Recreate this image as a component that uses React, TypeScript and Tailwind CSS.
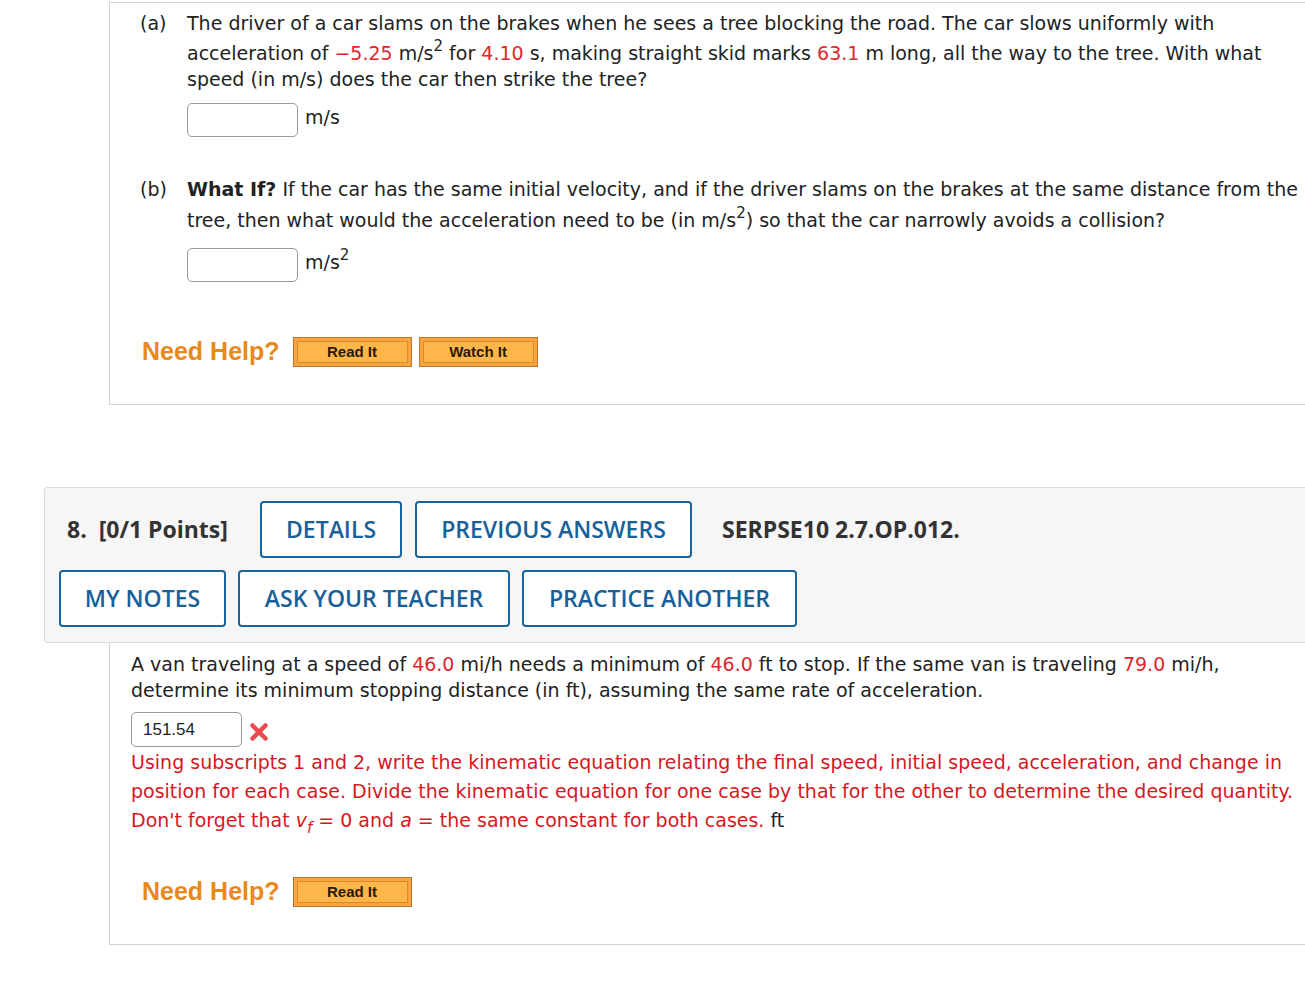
import React from "react";

const body = "font-['DejaVu_Sans',Verdana,sans-serif] text-[19px] text-[#222]";
const red = "text-[#e0262b]";
const sup = "text-[15px] relative -top-[9px]";

function HelpRow({ watch }: { watch?: boolean }) {
  return (
    <div className="flex items-center">
      <span className="font-['Liberation_Sans',Arial,sans-serif] font-bold text-[25px] leading-[30px] text-[#e8891c] mr-[13px] -mt-[3px]">
        Need Help?
      </span>
      <HelpButton label="Read It" />
      {watch && (
        <div className="ml-[7px]">
          <HelpButton label="Watch It" />
        </div>
      )}
    </div>
  );
}

function HelpButton({ label }: { label: string }) {
  return (
    <div className="w-[119px] h-[30px] border border-[#b8732c] bg-[#f9a43c] p-[3px]">
      <div className="h-full border border-[#d9892e] bg-[#fdb64a] flex items-center justify-center font-['Liberation_Sans',Arial,sans-serif] font-bold text-[15px] text-[#2a1a05]">
        {label}
      </div>
    </div>
  );
}

function AnswerBox({ value }: { value?: string }) {
  return (
    <div className="w-[111px] h-[34px] rounded-[5px] border border-[#9a9a9a] bg-white flex items-center pl-[11px] font-['Liberation_Sans',Arial,sans-serif] text-[17px] text-[#222]">
      {value}
    </div>
  );
}

function BlueButton({ label, w }: { label: string; w: string }) {
  return (
    <div
      className={`${w} h-[57px] rounded-[4px] border-2 border-[#1a659a] bg-white flex items-center justify-center font-['Open_Sans',sans-serif] font-semibold text-[23px] text-[#17609a]`}
    >
      {label}
    </div>
  );
}

export default function App() {
  return (
    <div className="min-h-screen w-full bg-white overflow-hidden">
      {/* previous question, parts a and b */}
      <div className={`${body} mt-[2px] ml-[109px] border-t border-l border-b border-[#d4d4d4] pl-[30px] pt-[7px] h-[403px] whitespace-nowrap`}>
        <div className="flex leading-[26px]">
          <span className="w-[47px] shrink-0">(a)</span>
          <div>
            <div>The driver of a car slams on the brakes when he sees a tree blocking the road. The car slows uniformly with</div>
            <div className="mt-[4px]">
              acceleration of <span className={red}>−5.25</span> m/s<sup className={sup}>2</sup> for{" "}
              <span className={red}>4.10</span> s, making straight skid marks <span className={red}>63.1</span> m long, all
              the way to the tree. With what
            </div>
            <div>speed (in m/s) does the car then strike the tree?</div>
            <div className="flex items-start mt-[11px]">
              <AnswerBox />
              <span className="ml-[7px] mt-[1px]">m/s</span>
            </div>
          </div>
        </div>

        <div className="flex leading-[26px] mt-[39px]">
          <span className="w-[47px] shrink-0">(b)</span>
          <div>
            <div>
              <b>What If?</b> If the car has the same initial velocity, and if the driver slams on the brakes at the same distance from the
            </div>
            <div className="mt-[5px]">
              tree, then what would the acceleration need to be (in m/s<sup className={sup}>2</sup>) so that the car narrowly avoids a
              collision?
            </div>
            <div className="flex items-start mt-[15px]">
              <AnswerBox />
              <span className="ml-[7px] mt-[1px]">
                m/s<sup className={sup}>2</sup>
              </span>
            </div>
          </div>
        </div>

        <div className="mt-[55px] ml-[2px]">
          <HelpRow watch />
        </div>
      </div>

      {/* question 8 header */}
      <div className="mt-[82px] ml-[44px] border border-r-0 border-[#dcdcdc] rounded-l-[4px] bg-[#f6f6f6] pl-[14px] pt-[13px] h-[156px]">
        <div className="flex items-center gap-[13px]">
          <span className="font-['Open_Sans',sans-serif] font-bold text-[23px] text-[#333] ml-[8px] w-[180px]">
            8.&nbsp; [0/1 Points]
          </span>
          <BlueButton label="DETAILS" w="w-[142px]" />
          <BlueButton label="PREVIOUS ANSWERS" w="w-[277px]" />
          <span className="font-['Open_Sans',sans-serif] font-bold text-[23px] text-[#333] ml-[17px]">
            SERPSE10 2.7.OP.012.
          </span>
        </div>
        <div className="flex items-center gap-[12px] mt-[12px]">
          <BlueButton label="MY NOTES" w="w-[167px]" />
          <BlueButton label="ASK YOUR TEACHER" w="w-[272px]" />
          <BlueButton label="PRACTICE ANOTHER" w="w-[275px]" />
        </div>
      </div>

      {/* question 8 body */}
      <div className={`${body} ml-[109px] border-l border-b border-[#d4d4d4] pl-[21px] pt-[8px] h-[302px] whitespace-nowrap`}>
        <div className="leading-[26px]">
          <div>
            A van traveling at a speed of <span className={red}>46.0</span> mi/h needs a minimum of{" "}
            <span className={red}>46.0</span> ft to stop. If the same van is traveling <span className={red}>79.0</span> mi/h,
          </div>
          <div>determine its minimum stopping distance (in ft), assuming the same rate of acceleration.</div>
        </div>
        <div className="flex items-center mt-[9px]">
          <div className="w-[111px] h-[35px] rounded-[5px] border border-[#9a9a9a] bg-white flex items-center pl-[11px] font-['Liberation_Sans',Arial,sans-serif] text-[17px] text-[#222]">
            151.54
          </div>
          <svg className="ml-[7px] mt-[4px]" width="20" height="20" viewBox="0 0 20 20">
            <path d="M3.5 3.5 L16.5 16.5 M16.5 3.5 L3.5 16.5" stroke="#ea4a4f" strokeWidth="4.5" strokeLinecap="round" />
          </svg>
        </div>
        <div className="leading-[29px] mt-[1px] text-[#d8161e]">
          <div>
            Using subscripts 1 and 2, write the kinematic equation relating the final speed, initial speed, acceleration, and change in
          </div>
          <div>
            position for each case. Divide the kinematic equation for one case by that for the other to determine the desired quantity.
          </div>
          <div>
            Don't forget that <i>v</i>
            <sub className="text-[15px] italic relative top-[6px]">f</sub> = 0 and <i>a</i> = the same constant for both cases.{" "}
            <span className="text-[#222]">ft</span>
          </div>
        </div>
        <div className="mt-[42px] ml-[11px]">
          <HelpRow />
        </div>
      </div>
    </div>
  );
}
